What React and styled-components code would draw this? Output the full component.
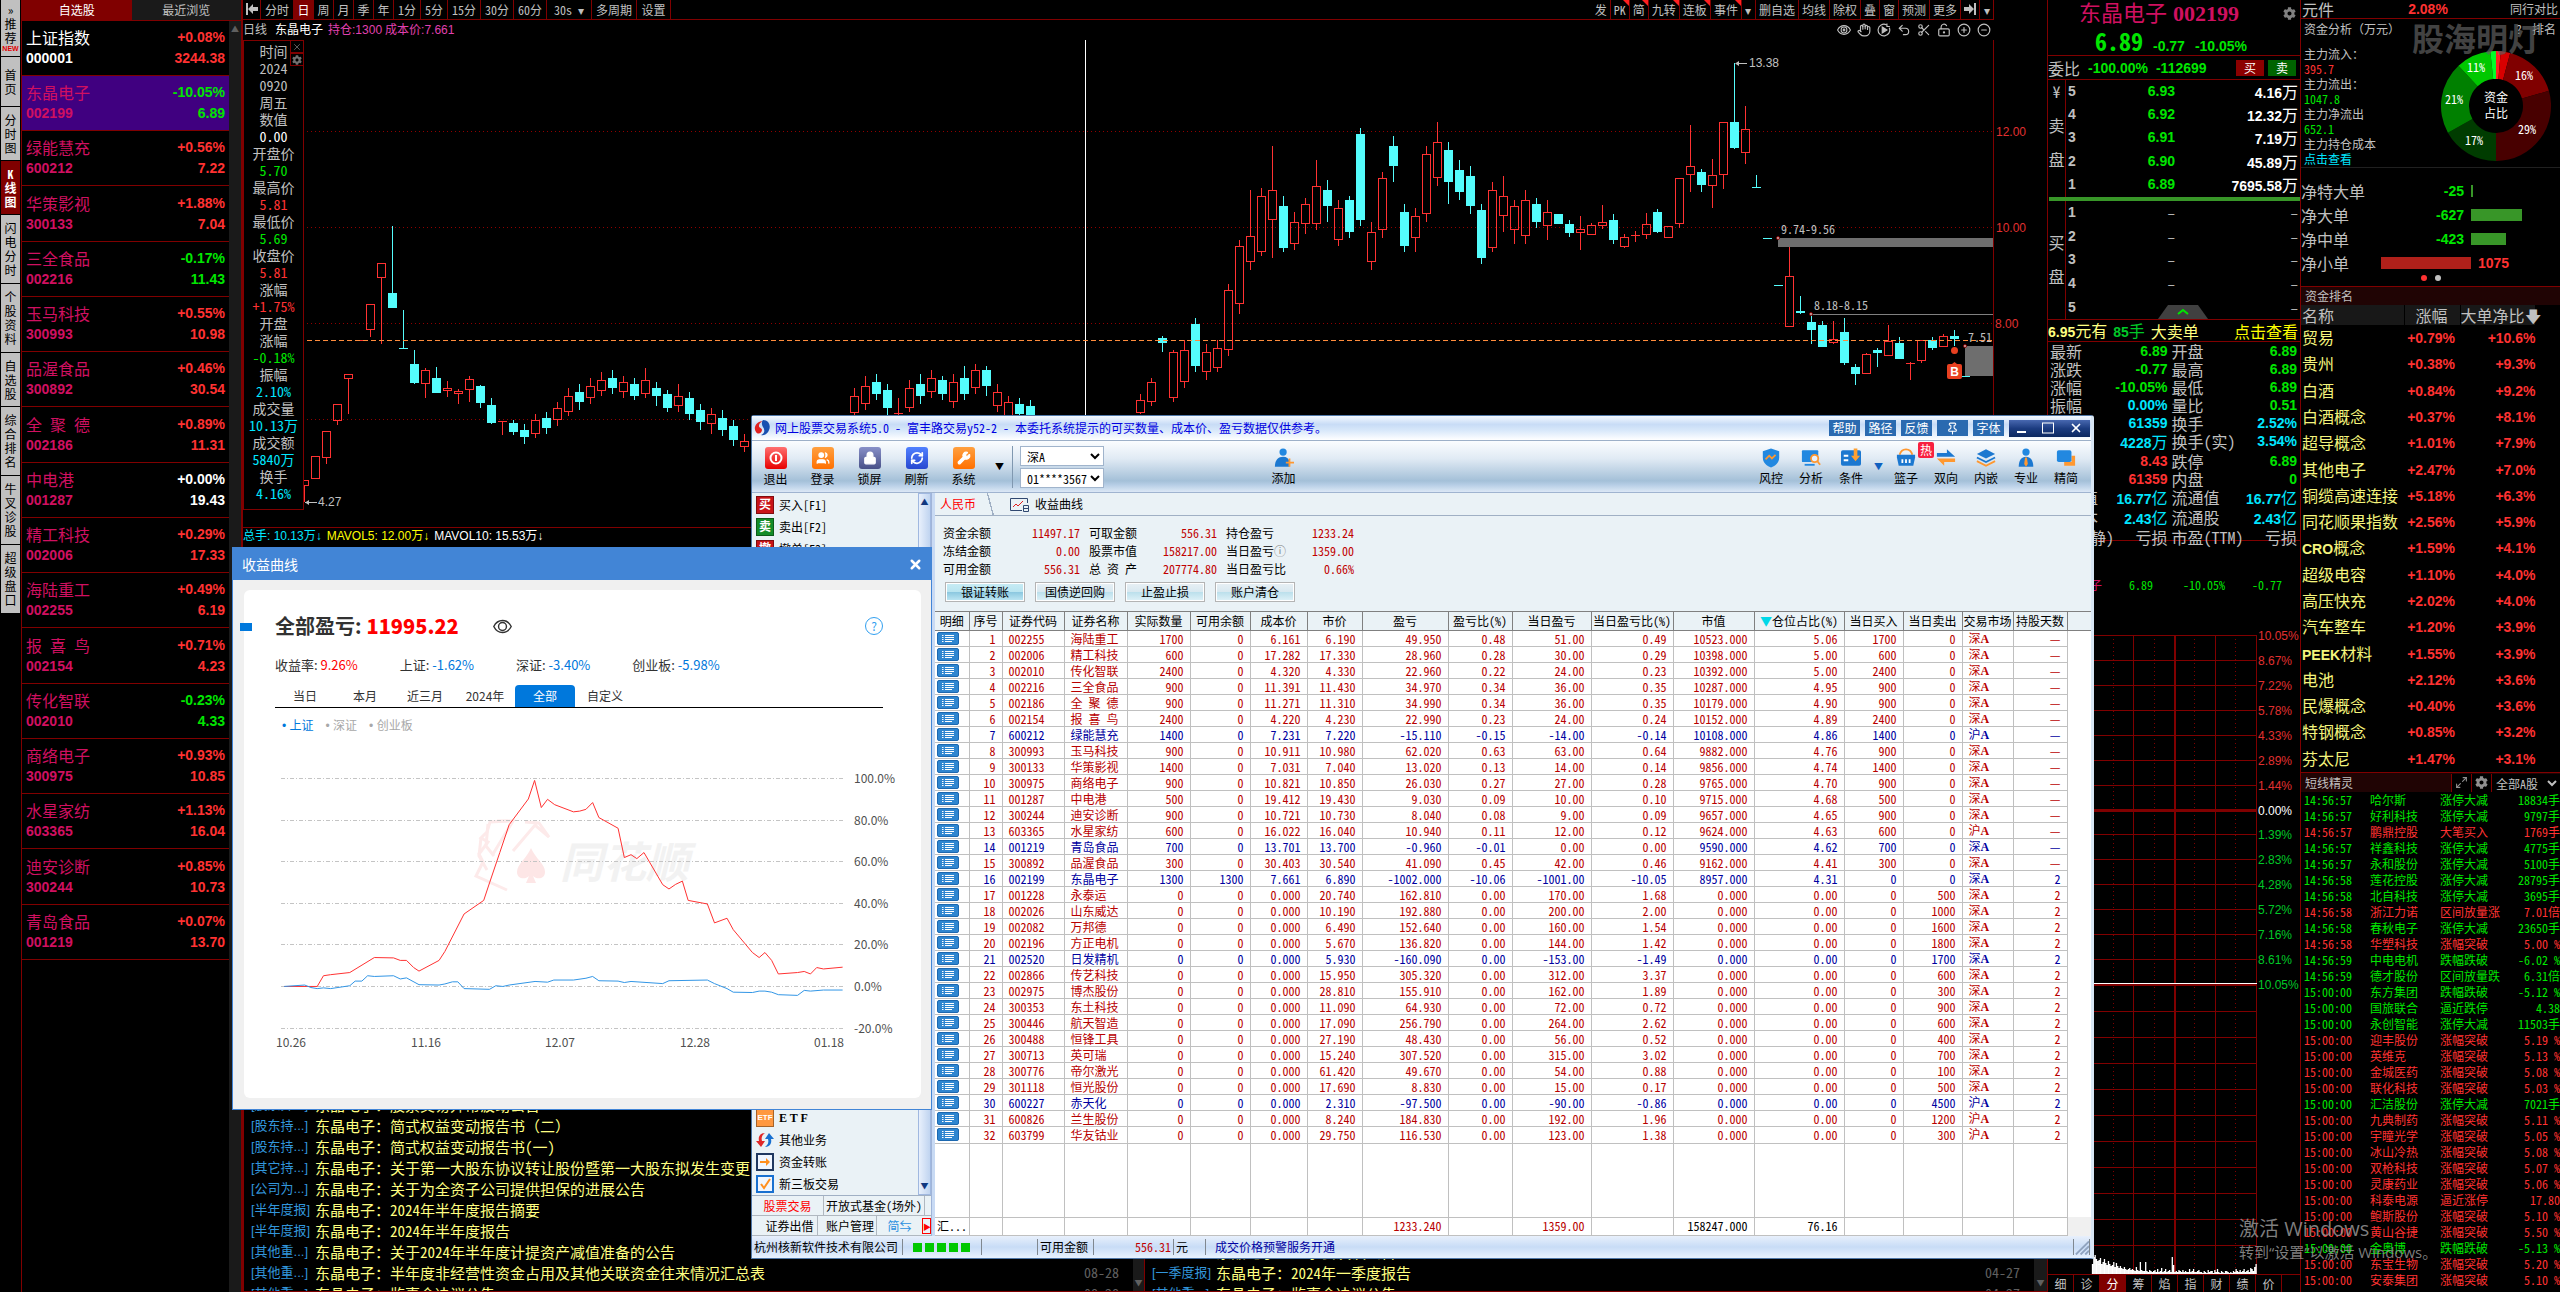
import React from "react";
import styled, { createGlobalStyle, css } from "styled-components";
import {
  Hand,
  Undo2,
  Scissors,
  LockKeyholeOpen,
  CirclePlus,
  CircleMinus,
  Maximize2,
  Users,
  Lock,
  RefreshCw,
  Wrench,
  X,
  Pin,
} from "lucide-react";
import { FaCog } from "react-icons/fa";

const mono = `"Noto Sans Mono CJK SC", "Liberation Sans", "Noto Sans CJK SC", sans-serif`;
const sans = `"Liberation Sans", "Noto Sans CJK SC", sans-serif`;
const cjk = `"Noto Sans CJK SC", sans-serif`;
const RED = "#ff3232";
const GREEN = "#00e600";
const CYAN = "#00e6ff";
const LINE = "#800000";
const PINK = "#d01060";

const GlobalStyle = createGlobalStyle`
  * { box-sizing: border-box; }
  body { margin: 0; background: #000; overflow: hidden; }
  button, select { font: inherit; color: inherit; margin: 0; border-radius: 0; }
  a { color: inherit; text-decoration: none; }
`;

const Desktop = styled.div`
  position: relative;
  display: grid;
  grid-template-columns: 21px 220px minmax(0, 1fr) 253px 260px;
  height: 100vh;
  overflow: hidden;
  background: #000;
  color: #c0c0c0;
  font: 12px/16px ${mono};
`;

/* ---------- left side tabs ---------- */

const SideTabs = styled.nav`
  display: flex;
  flex-direction: column;
  padding-left: 1px;
`;

const SideTab = styled.button`
  display: flex;
  flex-direction: column;
  align-items: center;
  justify-content: center;
  width: 19px;
  height: ${(p) => p.$h}px;
  padding: 0;
  border: 0;
  border-bottom: 1px solid #000;
  background: ${(p) => (p.$on ? LINE : "#c0c0c0")};
  color: ${(p) => (p.$on ? "#fff" : "#000")};
  font: ${(p) => (p.$on ? "bold" : "normal")} 12px/14px ${mono};

  small {
    color: #e00000;
    font: bold 7px/8px ${sans};
  }
`;

const sideTabs = [
  ["»推荐", 57],
  ["首页", 50],
  ["分时图", 54],
  ["K线图", 54],
  ["闪电分时", 69],
  ["个股资料", 69],
  ["自选股", 54],
  ["综合排名", 69],
  ["牛叉诊股", 69],
  ["超级盘口", 69],
];

/* ---------- watch list ---------- */

const WatchPanel = styled.section`
  display: grid;
  grid-template-columns: minmax(0, 1fr) 12px;
  grid-template-rows: 21px minmax(0, 1fr);
  border-left: 1px solid ${LINE};
`;

const WatchTabs = styled.div`
  display: flex;
  grid-column: 1 / 3;
  border-bottom: 1px solid ${LINE};
`;

const WatchTab = styled.button`
  flex: 1;
  padding: 0;
  border: 0;
  background: ${(p) => (p.$on ? LINE : "#1a1a1a")};
  color: ${(p) => (p.$on ? "#fff" : "#c0c0c0")};
`;

const WatchRow = styled.div`
  display: grid;
  grid-template-columns: 1fr auto;
  align-content: center;
  height: 55px;
  padding: 0 4px;
  border-bottom: 1px solid ${LINE};
  color: ${(p) => p.$color};
  background: ${(p) => (p.$on ? "#400080" : "transparent")};
  font: bold 14px/21px ${sans};

  &:nth-child(4n) {
    height: 56px;
  }
`;

const WatchName = styled.span`
  color: ${(p) => p.$color};
  font: 16px/21px ${mono};
`;

const WatchCode = styled.span`
  color: ${(p) => p.$color};
`;

const Right = styled.span`
  text-align: right;
`;

const ScrollTrack = styled.div`
  display: flex;
  flex-direction: column;
  align-items: center;
  justify-content: ${(p) => (p.$end ? "flex-end" : "flex-start")};
  background: #1a1a1a;
  color: #606060;
  font-size: 8px;
`;

const watch = [
  ["上证指数", "000001", "+0.08%", "3244.38"],
  ["东晶电子", "002199", "-10.05%", "6.89"],
  ["绿能慧充", "600212", "+0.56%", "7.22"],
  ["华策影视", "300133", "+1.88%", "7.04"],
  ["三全食品", "002216", "-0.17%", "11.43"],
  ["玉马科技", "300993", "+0.55%", "10.98"],
  ["品渥食品", "300892", "+0.46%", "30.54"],
  ["全 聚 德", "002186", "+0.89%", "11.31"],
  ["中电港", "001287", "+0.00%", "19.43"],
  ["精工科技", "002006", "+0.29%", "17.33"],
  ["海陆重工", "002255", "+0.49%", "6.19"],
  ["报 喜 鸟", "002154", "+0.71%", "4.23"],
  ["传化智联", "002010", "-0.23%", "4.33"],
  ["商络电子", "300975", "+0.93%", "10.85"],
  ["水星家纺", "603365", "+1.13%", "16.04"],
  ["迪安诊断", "300244", "+0.85%", "10.73"],
  ["青岛食品", "001219", "+0.07%", "13.70"],
];

const signColor = (v) =>
  v.startsWith("-") ? GREEN : v === "+0.00%" ? "#fff" : RED;

const WatchList = () => (
  <WatchPanel>
    <WatchTabs>
      <WatchTab $on>自选股</WatchTab>
      <WatchTab>最近浏览</WatchTab>
    </WatchTabs>
    <div>
      {watch.map(([name, code, pct, price], i) => {
        const c = i === 0 ? "#fff" : PINK;
        return (
          <WatchRow key={code} $on={i === 1} $color={signColor(pct)}>
            <WatchName $color={c}>{name}</WatchName>
            <Right>{pct}</Right>
            <WatchCode $color={c}>{code}</WatchCode>
            <Right>{price}</Right>
          </WatchRow>
        );
      })}
    </div>
    <ScrollTrack>▲</ScrollTrack>
  </WatchPanel>
);

/* ---------- k-line chart ---------- */

const ChartPanel = styled.main`
  display: flex;
  flex-direction: column;
  min-width: 0;
  border-left: 2px solid ${LINE};
  border-bottom: 1px solid ${LINE};
`;

const Toolbar = styled.div`
  display: flex;
  height: 20px;
  margin-right: 53px;
  border-bottom: 1px solid ${LINE};
`;

const ToolButton = styled.button`
  position: relative;
  min-width: ${(p) => p.$min || 20}px;
  padding: 0 ${(p) => (p.$wide ? 4 : 3)}px;
  border: 0;
  border-right: 1px solid ${LINE};
  background: ${(p) => (p.$on ? LINE : "transparent")};
  color: ${(p) => (p.$on ? "#fff" : "#c0c0c0")};
  line-height: 19px;
  white-space: nowrap;

  ${(p) =>
    p.$tight &&
    css`
      padding: 0 1px;
    `}
  ${(p) =>
    p.$hot &&
    css`
      &::after {
        content: "";
        position: absolute;
        top: 0;
        right: 0;
        border-top: 6px solid #ff2020;
        border-left: 6px solid transparent;
      }
    `}
`;

const Grow = styled.div`
  flex: 1;
`;

const ChartTitle = styled.div`
  display: flex;
  align-items: center;
  gap: 3px;
  height: 20px;
  padding-right: 56px;
  color: #e040b0;
  font: 12px/16px ${sans};

  svg {
    color: #c0c0c0;
  }
`;

const ChartIcons = styled.div`
  display: flex;
  gap: 6px;
  margin-left: auto;
`;

const White = styled.span`
  padding: 0 2px 0 5px;
  color: #fff;
`;

const Gray = styled.span`
  color: #c0c0c0;
`;

const ChartBody = styled.div`
  position: relative;
  border-bottom: 1px solid ${LINE};

  > svg {
    display: block;
    width: 100%;
    height: 487px;
  }
`;

const InfoBox = styled.div`
  position: absolute;
  top: 0;
  left: 0;
  display: flex;
  flex-direction: column;
  width: 61px;
  height: 470px;
  padding-top: 2px;
  border: 1px solid ${LINE};
  background: #000;
  color: #c0c0c0;
  font: 14px/17px ${mono};
  text-align: center;
`;

const InfoLine = styled.span`
  color: ${(p) => p.$color};
`;

const InfoTools = styled.div`
  position: absolute;
  top: -1px;
  right: -1px;
  display: flex;
  flex-direction: column;

  button {
    display: grid;
    place-items: center;
    width: 14px;
    height: 13px;
    padding: 0;
    border: 1px solid ${LINE};
    background: #000;
    color: #707070;
  }

  svg {
    width: 10px;
    height: 10px;
  }
`;

const infoLines = [
  ["时间"], ["2024"], ["0920"], ["周五"], ["数值"], ["0.00", "#fff"],
  ["开盘价"], ["5.70", GREEN], ["最高价"], ["5.81", RED],
  ["最低价"], ["5.69", GREEN], ["收盘价"], ["5.81", RED],
  ["涨幅"], ["+1.75%", RED], ["开盘"], ["涨幅"], ["-0.18%", GREEN],
  ["振幅"], ["2.10%", CYAN], ["成交量"], ["10.13万", CYAN],
  ["成交额"], ["5840万", CYAN], ["换手"], ["4.16%", CYAN],
];

// one entry per candle: slot, u|d, body top, body bottom, high, low
const candles = `0 u 480 486 480 502,1 u 456 479 456 479,2 u 431 458 431 464,3 u 404 421 404 425,4 u 374 379 374 414,5 u 340 340 340 340,6 u 304 330 304 337,7 u 263 278 263 344,8 d 293 308 226 308,9 d 348 348 310 348,10 d 364 383 350 384,11 u 370 384 368 398,12 d 378 393 367 393,13 u 388 391 381 397,14 u 391 394 389 404,15 u 379 390 376 402,16 d 386 403 385 408,17 d 405 423 398 424,18 u 421 421 421 435,19 d 423 432 420 435,20 d 430 437 424 444,21 u 420 434 414 438,22 d 418 428 412 434,23 u 408 420 402 426,24 u 396 412 388 416,25 d 392 402 384 410,26 u 386 398 378 404,27 u 380 391 372 396,28 d 378 388 370 394,29 u 382 392 376 398,30 d 384 396 378 400,31 u 380 394 368 398,32 d 388 396 382 406,33 d 394 408 390 412,34 u 396 406 384 412,35 d 398 414 392 420,36 d 410 422 404 430,37 u 414 424 408 434,38 d 418 430 410 436,39 d 426 440 420 446,40 u 441 447 434 452,50 u 396 413 388 415,51 u 386 404 376 410,52 d 382 394 374 400,53 d 390 408 384 418,54 u 413 413 398 418,55 u 388 408 380 412,56 d 384 396 374 404,57 u 378 392 370 398,58 d 380 394 376 400,59 u 382 402 374 408,60 d 378 394 366 400,61 u 370 388 364 394,62 d 370 386 366 396,63 u 392 406 384 412,64 u 402 418 396 418,65 d 404 414 398 418,66 d 406 420 400 420,76 u 400 413 394 414,77 u 382 402 378 406,78 d 338 343 336 352,79 u 352 398 350 402,80 u 350 382 340 388,81 d 324 366 318 372,82 u 352 372 344 380,83 u 348 368 340 372,84 u 290 350 284 356,85 u 246 304 240 314,86 u 236 262 190 270,87 u 196 252 188 256,88 u 190 220 146 258,89 d 206 248 196 252,90 u 222 244 212 250,91 u 204 224 198 234,92 u 186 224 160 230,93 d 190 206 180 222,94 u 208 240 200 246,95 d 200 232 196 238,96 d 134 220 128 226,97 u 232 262 222 270,98 u 178 230 172 238,99 d 146 166 136 182,100 d 212 246 204 252,101 u 216 238 208 252,102 u 154 214 146 222,103 u 142 178 122 186,104 d 150 182 142 204,105 d 170 192 160 200,106 d 176 206 166 214,107 d 210 258 204 264,108 u 190 248 182 252,109 u 196 216 176 232,110 u 206 230 200 244,111 u 200 236 190 244,112 d 204 222 198 228,113 u 212 226 200 240,114 d 214 224 214 224,115 d 224 233 220 237,116 u 229 233 216 250,117 u 225 235 223 235,118 u 222 226 205 229,119 d 220 240 214 244,120 u 237 247 234 248,121 u 235 236 231 242,122 u 224 235 213 239,123 d 212 232 209 233,124 u 226 238 226 238,125 u 178 224 178 228,126 u 166 175 125 192,127 d 172 185 169 192,128 u 175 186 159 208,129 u 122 175 122 189,130 d 122 148 63 149,131 u 129 153 106 164,132 d 187 187 175 187,133 d 238 238 238 238,134 d 285 285 285 285,135 u 276 327 247 327,136 d 311 313 296 314,137 d 322 330 314 344,138 d 325 347 321 347,139 u 339 343 321 344,140 d 332 363 318 365,141 d 367 374 364 385,142 u 354 374 353 374,143 d 350 353 348 367,144 u 341 356 325 356,145 d 343 359 337 359,146 u 363 364 362 380,147 u 340 361 340 363,148 d 340 348 337 350,149 u 336 347 334 347,150 d 336 339 330 346,151 d 376 376 376 376`
  .split(",")
  .map((s) => {
    const [i, dir, ...ys] = s.split(" ");
    return { x: 304.5 + 11 * Number(i), dir, ys: ys.map(Number) };
  });

const Candle = ({ x, dir, ys: [top, bottom, high, low] }) => {
  const up = dir === "u";
  const color = up ? "#ff3232" : "#54fcfc";
  if (bottom - top < 2) {
    return (
      <g stroke={color}>
        <path d={`M${x - 4.5} ${top + 0.5}h9M${x} ${high}V${low}`} />
      </g>
    );
  }
  return (
    <g stroke={color}>
      <path d={`M${x} ${high}V${top}M${x} ${bottom}V${low}`} />
      <rect
        x={x - 4}
        y={top + 0.5}
        width="8"
        height={bottom - top - 1}
        fill={up ? "none" : color}
      />
    </g>
  );
};

const KLine = () => (
  <svg viewBox="243 40 1804 487" preserveAspectRatio="xMinYMin slice" fontFamily={sans} fontSize="12">
    {[131.5, 227.5, 323.5, 419.5].map((y) => (
      <path key={y} d={`M243 ${y}H1993`} stroke="#900000" strokeDasharray="1 3" />
    ))}
    <path d="M1085.5 40V527" stroke="#fff" />
    <path d="M1993.5 40V527" stroke={LINE} />
    <rect x="1778" y="238" width="215" height="9" fill="#6e6e6e" />
    <path d="M1811 314.5H1993" stroke="#808080" />
    <rect x="1965" y="346" width="28" height="30" fill="#6e6e6e" />
    {candles.map((c) => (
      <Candle key={c.x} {...c} />
    ))}
    <path d="M243 340.5H1993" stroke="#ff8c3c" strokeDasharray="5 3" />
    <g fill="#e03030">
      <text x="1996" y="136">12.00</text>
      <text x="1996" y="232">10.00</text>
      <text x="1995" y="328">8.00</text>
    </g>
    <g fill="#c0c0c0">
      <text x="1749" y="67">13.38</text>
      <text x="318" y="506">4.27</text>
      <g fontFamily={mono}>
        <text x="1781" y="234">9.74-9.56</text>
        <text x="1814" y="310">8.18-8.15</text>
        <text x="1968" y="342">7.51</text>
      </g>
    </g>
    <path d="M1747 63.5H1736M305 502.5H317" stroke="#c0c0c0" />
    <path d="M1739 61v5l-4-2.5zM309 500v5l-4-2.5z" fill="#c0c0c0" />
    <g fill="#e0c0c0" stroke={LINE}>
      <circle cx="1778" cy="238" r="1.5" />
      <circle cx="1811" cy="314" r="1.5" />
      <circle cx="1965" cy="346" r="1.5" />
    </g>
    <circle cx="1954.5" cy="350.5" r="3.5" fill="#e84020" />
    <rect x="1947" y="364" width="15" height="15" rx="2" fill="#e84020" />
    <path d="M1952 364l2.5-2 2.5 2z" fill="#e84020" />
    <text x="1954.5" y="376" textAnchor="middle" fill="#fff" fontWeight="bold">B</text>
  </svg>
);

const VolumeLegend = styled.div`
  display: flex;
  gap: 5px;
  height: 17px;
  color: #fff;
  font: 12px/17px ${sans};
`;

const Tint = styled.span`
  color: ${(p) => p.$c};
`;

const News = styled.div`
  display: grid;
  grid-template-columns: minmax(0, 1fr) 11px minmax(0, 1fr) 13px;
  height: 197px;
  margin-top: auto;
`;

const NewsList = styled.div`
  overflow: hidden;
  padding-left: 7px;
  border-left: 1px solid ${LINE};
`;

const NewsItem = styled.a`
  display: flex;
  gap: 4px;
  align-items: center;
  height: 21px;
  padding-right: 14px;
  color: #ffff80;
  font: 15px/21px ${mono};
  white-space: nowrap;
`;

const NewsTag = styled.span`
  width: 60px;
  color: #3296dc;
  font: 13px/21px ${sans};
`;

const NewsDate = styled.time`
  margin-left: auto;
  color: #606060;
  font: 14px/21px ${mono};
`;

const newsLeft = [
  ["[股票异...]", "股票交易异常波动公告", "10-29"],
  ["[股东持...]", "简式权益变动报告书（二）", "10-10"],
  ["[股东持...]", "简式权益变动报告书(一)", "10-10"],
  ["[其它持...]", "关于第一大股东协议转让股份暨第一大股东拟发生变更", "10-08"],
  ["[公司为...]", "关于为全资子公司提供担保的进展公告", "09-20"],
  ["[半年度报]", "2024年半年度报告摘要", "08-28"],
  ["[半年度报]", "2024年半年度报告", "08-28"],
  ["[其他重...]", "关于2024年半年度计提资产减值准备的公告", "08-28"],
  ["[其他重...]", "半年度非经营性资金占用及其他关联资金往来情况汇总表", "08-28"],
  ["[其他重...]", "监事会决议公告", "08-28"],
];

const NewsColumn = ({ items }) => (
  <NewsList>
    {items.map(([tag, text, date], i) => (
      <NewsItem key={i} href="#">
        <NewsTag>{tag}</NewsTag>
        <span>东晶电子：{text}</span>
        <NewsDate>{date}</NewsDate>
      </NewsItem>
    ))}
  </NewsList>
);

const newsRight = Array.from({ length: 8 }, () => ["[其他重...]", "董事会决议公告", "04-27"]).concat([
  ["[一季度报]", "2024年一季度报告", "04-27"],
  ["[其他重...]", "监事会决议公告", "04-27"],
]);

const EyeIcon = ({ size = 14 }) => (
  <svg width={size} height={size} viewBox="0 0 24 24" fill="none" stroke="currentColor" strokeWidth="1.8">
    <path d="M1 12C6 2 18 2 23 12 18 22 6 22 1 12z" />
    <circle cx="12" cy="12" r="5" />
    {size < 16 && <circle cx="12" cy="12" r="1.5" />}
  </svg>
);

const ReplayIcon = () => (
  <svg width="14" height="14" viewBox="0 0 24 24" fill="none" stroke="currentColor" strokeWidth="2">
    <path d="M16 3a10 10 0 1 0 5 5M17 1v5h5" />
    <path d="M9 7l8 5-8 5z" fill="currentColor" />
  </svg>
);

const BarArrow = ({ flip }) => (
  <svg width="12" height="12" viewBox="0 0 12 12" fill="currentColor">
    {flip ? (
      <path d="M0 4h5V1l5 5-5 5V8H0zM10 0h2v12h-2z" />
    ) : (
      <path d="M12 4H7V1L2 6l5 5V8h5zM0 0h2v12H0z" />
    )}
  </svg>
);

const periods = [
  ["周"], ["月"], ["季"], ["年"], ["1分"], ["5分"], ["15分"], ["30分"], ["60分"],
  ["30s ▾", 45], ["多周期", 45], ["设置", 34],
];

const Chart = () => (
  <ChartPanel>
    <Toolbar>
      <ToolButton $min={18} $tight aria-label="收起"><BarArrow /></ToolButton>
      <ToolButton $wide>分时</ToolButton>
      <ToolButton $on>日</ToolButton>
      {periods.map(([t, w]) => (
        <ToolButton key={t} $wide={t.length > 1} $min={w}>{t}</ToolButton>
      ))}
      <Grow />
      {["发", "PK", "简", "九转", "连板", "事件"].map((t, i) => (
        <ToolButton key={t} $min={19} $hot={i > 0}>{t}</ToolButton>
      ))}
      <ToolButton $min={14} $tight>▾</ToolButton>
      {["删自选", "均线", "除权", "叠", "窗", "预测", "更多"].map((t) => (
        <ToolButton key={t} $min={19}>{t}</ToolButton>
      ))}
      <ToolButton $min={19} $tight aria-label="展开"><BarArrow flip /></ToolButton>
      <ToolButton $min={14} $tight>▾</ToolButton>
    </Toolbar>
    <ChartTitle>
      <Gray>日线</Gray>
      <White>东晶电子</White>
      <span>持仓:1300</span>
      <span>成本价:7.661</span>
      <ChartIcons>
        <EyeIcon />
        <Hand size={14} />
        <ReplayIcon />
        <Undo2 size={14} />
        <Scissors size={14} />
        <LockKeyholeOpen size={14} />
        <CirclePlus size={14} />
        <CircleMinus size={14} />
      </ChartIcons>
    </ChartTitle>
    <ChartBody>
      <KLine />
      <InfoBox>
        {infoLines.map(([t, c], i) => (
          <InfoLine key={i} $color={c}>{t}</InfoLine>
        ))}
        <InfoTools>
          <button aria-label="关闭"><X /></button>
          <button aria-label="设置"><FaCog /></button>
        </InfoTools>
      </InfoBox>
    </ChartBody>
    <VolumeLegend>
      <Tint $c={CYAN}>总手: 10.13万↓</Tint>
      <Tint $c="#ffff00">MAVOL5: 12.00万↓</Tint>
      <span>MAVOL10: 15.53万↓</span>
    </VolumeLegend>
    <News>
      <NewsColumn items={newsLeft} />
      <ScrollTrack $end>▼</ScrollTrack>
      <NewsColumn items={newsRight} />
      <ScrollTrack $end>▼</ScrollTrack>
    </News>
  </ChartPanel>
);

/* ---------- quote panel ---------- */

const QuotePanel = styled.section`
  display: flex;
  flex-direction: column;
  border-left: 1px solid ${LINE};
  font: bold 14px/18px ${sans};
`;

const QuoteHead = styled.header`
  display: grid;
  grid-template-columns: 1fr auto;
  align-items: center;
  height: 56px;
  padding: 0 4px 0 31px;
  border-bottom: 1px solid ${LINE};
  color: ${PINK};

  svg {
    color: #808080;
  }
`;

const QuoteName = styled.h1`
  margin: 0;
  font: 22px/26px "Liberation Serif", "Noto Sans CJK SC", serif;

  b {
    margin-left: 6px;
  }
`;

const QuotePrice = styled.div`
  display: flex;
  gap: 10px;
  align-items: baseline;
  padding-left: 16px;
  color: ${GREEN};

  strong {
    font: bold 24px/26px ${mono};
  }
`;

const Ratio = styled.div`
  display: flex;
  gap: 8px;
  align-items: center;
  height: 24px;
  padding-right: 4px;
  border-bottom: 1px solid ${LINE};
  color: ${GREEN};
`;

const Label = styled.span`
  color: #c0c0c0;
  font: 16px/18px ${mono};
`;

const TradeButton = styled.button`
  width: 28px;
  height: 16px;
  margin-left: ${(p) => (p.$first ? "auto" : "-4px")};
  padding: 0;
  border: 0;
  background: ${(p) => p.$bg};
  color: #fff;
  font: 12px/16px ${mono};
`;

const Book = styled.div`
  display: grid;
  grid-template-columns: 18px 1fr;
  height: ${(p) => p.$h}px;
`;

const BookSide = styled.div`
  display: flex;
  flex-direction: column;
  gap: 16px;
  align-items: center;
  padding-top: ${(p) => p.$top}px;
  border-right: 1px solid ${LINE};
  font: 16px/18px ${mono};
`;

const BookRows = styled.div`
  display: flex;
  flex-direction: column;
  justify-content: space-around;
`;

const BookRow = styled.div`
  display: grid;
  grid-template-columns: 20px 87px 1fr;
  padding: 0 2px;
  color: #c0c0c0;

  em {
    color: ${GREEN};
    font-style: normal;
    text-align: right;
  }

  span:last-child {
    color: #fff;
    text-align: right;
  }
`;

const Unit = styled.i`
  font: 16px/18px ${mono};
`;

const Empty = styled.i`
  color: #c0c0c0;
  font: 14px/18px ${mono};
`;

const BookSplit = styled.div`
  height: 4px;
  margin-left: 1px;
  background: #389628;
`;

const FoldTab = styled.button`
  position: absolute;
  bottom: 0;
  left: 110px;
  width: 50px;
  height: 14px;
  padding: 0;
  border: 0;
  background: #404040;
  clip-path: polygon(20% 0, 80% 0, 100% 100%, 0 100%);
  line-height: 0;
`;

const BidWrap = styled.div`
  position: relative;
  border-bottom: 1px solid ${LINE};
`;

const BigOrder = styled.div`
  display: flex;
  gap: 6px;
  align-items: center;
  height: 22px;
  padding-right: 2px;
  border-bottom: 1px solid ${LINE};
  color: #ffff80;

  a {
    margin-left: auto;
    color: #ffff00;
    font: 16px/18px ${mono};
  }
`;

const Stats = styled.div`
  display: grid;
  grid-template-columns: auto 1fr auto 1fr;
  height: 199px;
  padding: 0 3px 0 2px;
  border-bottom: 1px solid ${LINE};

  > *:nth-child(4n + 3) {
    margin-left: 4px;
  }
`;

const Value = styled.span`
  color: ${(p) => p.$c};
  text-align: right;
`;

const stats = [
  ["最新", "6.89", GREEN, "开盘", "6.89", GREEN],
  ["涨跌", "-0.77", GREEN, "最高", "6.89", GREEN],
  ["涨幅", "-10.05%", GREEN, "最低", "6.89", GREEN],
  ["振幅", "0.00%", CYAN, "量比", "0.51", GREEN],
  ["总手", "61359", CYAN, "换手", "2.52%", CYAN],
  ["金额", "4228万", CYAN, "换手(实)", "3.54%", CYAN],
  ["涨停", "8.43", RED, "跌停", "6.89", GREEN],
  ["外盘", "61359", RED, "内盘", "0", GREEN],
  ["总市值", "16.77亿", CYAN, "流通值", "16.77亿", CYAN],
  ["总股本", "2.43亿", CYAN, "流通股", "2.43亿", CYAN],
  ["市盈(静)", "亏损", "#c0c0c0", "市盈(TTM)", "亏损", "#c0c0c0"],
];

// chinese units stay thin next to the bold digits
const Num = ({ v }) => {
  const m = v.match(/^([-+\d.%]*)(.*)$/);
  return (
    <>
      {m[1]}
      {m[2] && <Unit>{m[2]}</Unit>}
    </>
  );
};

const MiniChart = styled.svg`
  flex: 1;
  display: block;
  width: 100%;
  min-height: 0;
  border-bottom: 1px solid ${LINE};
  font-weight: normal;
`;

const upper = ["10.05%", "8.67%", "7.22%", "5.78%", "4.33%", "2.89%", "1.44%", "0.00%"];
const lower = ["1.39%", "2.83%", "4.28%", "5.72%", "7.16%", "8.61%", "10.05%"];
const ticks = "10 17 19 15 13 14 16 10 12 15 11 9 13 10 8 9 12 7 11 8 6 8 6 5 7 5 4 5 6 4 5 4 3 7 4 3 12 4 3 3 12 3 2 4 3 2 3 4 2 5 2 3 6 2 3 5 2 3 4 2 17 9 2 3 2 4 3 2 4 2 3 2 2 5 2 3 5 2 2 3 4 2 2 1 3 2 1 4 2 3 3 1 4 2 5 2 1 3 2 1 3 3 2 1 2 1 3 2 5 3 2 4 2 3 5 2 3 4 2 6 5 3 7 10"
  .split(" ")
  .map(Number);

const IntradayGrid = () => (
  <MiniChart viewBox="0 0 252 733" preserveAspectRatio="xMinYMin slice" fontFamily={sans} fontSize="12">
    <g fontFamily={mono} fill={GREEN}>
      <text x="6" y="49" fill={PINK}>东晶电子</text>
      <text x="81" y="49">6.89</text>
      <text x="135" y="49">-10.05%</text>
      <text x="204" y="49">-0.77</text>
    </g>
    <g stroke={LINE} fill="none">
      {upper.slice(0, 7).map((t, i) => (
        <path key={t} d={`M0 ${94.5 + 25 * i}H209`} />
      ))}
      <path d="M0 269.5H209" strokeWidth="3" />
      {lower.slice(0, 6).map((t, i) => (
        <path key={t} d={`M0 ${293.5 + 25 * i}H209`} />
      ))}
      <path d="M0 444H209" strokeWidth="2" />
      {Array.from({ length: 10 }, (_, i) => (
        <path key={i} d={`M0 ${470.5 + 26 * i}H209`} />
      ))}
      <path d="M85.5 94V733M167.5 94V733M208.5 94V733" />
      <path d="M127 94V733" strokeWidth="2" />
      <path d="M65.5 94V733M106.5 94V733M146.5 94V733M187.5 94V733" strokeDasharray="1 3" />
    </g>
    <path d="M44 442.5H209" stroke="#fff" />
    {upper.map((t, i) => (
      <text key={t} x="210" y={99 + 25 * i} fill={i === 7 ? "#fff" : "#e03030"}>{t}</text>
    ))}
    {lower.map((t, i) => (
      <text key={t} x="210" y={298 + 25 * i} fill="#00c828">{t}</text>
    ))}
    <path
      d={ticks.map((h, i) => `M${44.5 + i * 1.33} 733v-${h}`).join("")}
      stroke="#fff"
      strokeWidth="1.3"
    />
  </MiniChart>
);

const BottomTabs = styled.div`
  display: flex;
  height: 17px;
`;

const BottomTab = styled.button`
  width: 26px;
  padding: 0;
  border: 0;
  border-right: 1px solid ${LINE};
  background: ${(p) => (p.$on ? LINE : "transparent")};
  color: ${(p) => (p.$on ? "#fff" : "#c0c0c0")};
  font: 12px/16px ${mono};
`;

const Quote = () => (
  <QuotePanel>
    <QuoteHead>
      <QuoteName>东晶电子<b>002199</b></QuoteName>
      <FaCog size={13} />
      <QuotePrice>
        <strong>6.89</strong>
        <span>-0.77</span>
        <span>-10.05%</span>
      </QuotePrice>
    </QuoteHead>
    <Ratio>
      <Label>委比</Label>
      <span>-100.00%</span>
      <span>-112699</span>
      <TradeButton $first $bg="#8c0000">买</TradeButton>
      <TradeButton $bg="#006400">卖</TradeButton>
    </Ratio>
    <Book $h={117}>
      <BookSide $top={2}><span>¥</span><span>卖</span><span>盘</span></BookSide>
      <BookRows>
        {[["5", "6.93", "4.16"], ["4", "6.92", "12.32"], ["3", "6.91", "7.19"], ["2", "6.90", "45.89"], ["1", "6.89", "7695.58"]].map(([n, p, v]) => (
          <BookRow key={n}>
            <span>{n}</span>
            <em>{p}</em>
            <span><Num v={`${v}万`} /></span>
          </BookRow>
        ))}
      </BookRows>
    </Book>
    <BookSplit />
    <BidWrap>
      <Book $h={118}>
        <BookSide $top={32}><span>买</span><span>盘</span></BookSide>
        <BookRows>
          {["1", "2", "3", "4", "5"].map((n) => (
            <BookRow key={n}>
              <span>{n}</span>
              <Right><Empty>–</Empty></Right>
              <span><Empty>–</Empty></span>
            </BookRow>
          ))}
        </BookRows>
      </Book>
      <FoldTab aria-label="收起">
        <svg width="12" height="8" viewBox="0 0 12 8" fill="none" stroke={GREEN} strokeWidth="2">
          <path d="M1 6l5-4 5 4" />
        </svg>
      </FoldTab>
    </BidWrap>
    <BigOrder>
      <span>6.95<Unit>元有</Unit></span>
      <Tint $c="#00c828">85<Unit>手</Unit></Tint>
      <Unit>大卖单</Unit>
      <a href="#">点击查看</a>
    </BigOrder>
    <Stats>
      {stats.map(([a, av, ac, b, bv, bc]) => (
        <React.Fragment key={a}>
          <Label>{a}</Label>
          <Value $c={ac}><Num v={av} /></Value>
          <Label>{b}</Label>
          <Value $c={bc}><Num v={bv} /></Value>
        </React.Fragment>
      ))}
    </Stats>
    <IntradayGrid />
    <BottomTabs>
      {"细诊分筹焰指财绩价".split("").map((t) => (
        <BottomTab key={t} $on={t === "分"}>{t}</BottomTab>
      ))}
    </BottomTabs>
  </QuotePanel>
);

/* ---------- money flow panel ---------- */

const FlowPanel = styled.section`
  display: flex;
  flex-direction: column;
  min-height: 0;
  border-left: 1px solid ${LINE};
`;

const Sector = styled.div`
  display: flex;
  align-items: center;
  justify-content: space-between;
  height: 19px;
  padding: 0 2px 0 1px;
  border-bottom: 1px solid ${LINE};

  b {
    margin-left: 12px;
    color: ${RED};
    font: bold 14px/18px ${sans};
  }
`;

const FlowBox = styled.div`
  position: relative;
  display: grid;
  grid-template-columns: 132px 1fr;
  height: 149px;
  padding: 2px 4px 0 3px;
  border-bottom: 1px solid #202020;
`;

const FlowHead = styled.div`
  display: flex;
  grid-column: 1 / 3;
  gap: 10px;
  height: 16px;

  span:first-child {
    flex: 1;
  }
`;

const FlowLines = styled.div`
  display: flex;
  flex-direction: column;
  padding-top: 7px;
  line-height: 15px;

  a {
    color: ${CYAN};
  }
`;

const Brand = styled.div`
  position: absolute;
  top: 0;
  right: 20px;
  color: rgba(96, 96, 96, 0.7);
  font: bold 32px/36px ${cjk};
`;

const NetRow = styled.div`
  display: grid;
  grid-template-columns: 80px 90px 1fr;
  align-items: center;
  height: 24px;
  font: bold 14px/18px ${sans};
`;

const NetValue = styled.span`
  padding: 0 7px;
  color: ${(p) => p.$c};
  text-align: ${(p) => (p.$left ? "left" : "right")};
`;

const Bar = styled.div`
  width: ${(p) => p.$w}px;
  height: 12px;
  background: ${(p) => p.$c};
`;

const NetBox = styled.div`
  height: 119px;
  padding-top: 11px;
  border-bottom: 1px solid ${LINE};
`;

const Dots = styled.div`
  display: flex;
  gap: 8px;
  padding-left: 120px;

  i {
    width: 6px;
    height: 6px;
    border-radius: 50%;
    background: #c0c0c0;
  }

  i:first-child {
    background: ${RED};
  }
`;

const SectionTitle = styled.div`
  display: flex;
  align-items: center;
  height: ${(p) => p.$h}px;
  padding-left: 4px;
  background: #200404;
  border-top: ${(p) => (p.$line ? `1px solid ${LINE}` : "0")};

  > span {
    flex: 1;
  }
`;

const IconButton = styled.button`
  display: grid;
  place-items: center;
  width: 20px;
  height: 18px;
  padding: 0;
  border: 0;
  border-left: 1px solid ${LINE};
  background: #000;
  color: #909090;
`;

const MarketSelect = styled.select`
  width: 69px;
  height: 18px;
  padding: 0;
  border: 0;
  border-left: 1px solid ${LINE};
  background: #000;
`;

const RankTable = styled.table`
  width: 235px;
  height: 467px;
  border-collapse: collapse;
  color: ${RED};
  font: bold 14px/18px ${sans};
  text-align: right;
  table-layout: fixed;

  th {
    height: 20px;
    padding: 0;
    border-right: 1px solid #000;
    background: #181818;
    color: #c0c0c0;
    font: 16px/20px ${mono};
    text-align: right;
    white-space: nowrap;
  }

  th:nth-child(2) {
    padding-right: 12px;
  }

  th:first-child,
  td:first-child {
    padding: 0 0 0 1px;
    color: #f4f47c;
    text-align: left;
    white-space: nowrap;
  }

  th:first-child {
    color: #c0c0c0;
  }

  td {
    padding: 0;
  }

  td:nth-child(2) {
    padding-right: 5px;
  }
`;

const ranks = [
  ["贸易", "+0.79%", "+10.6%"],
  ["贵州", "+0.38%", "+9.3%"],
  ["白酒", "+0.84%", "+9.2%"],
  ["白酒概念", "+0.37%", "+8.1%"],
  ["超导概念", "+1.01%", "+7.9%"],
  ["其他电子", "+2.47%", "+7.0%"],
  ["铜缆高速连接", "+5.18%", "+6.3%"],
  ["同花顺果指数", "+2.56%", "+5.9%"],
  ["CRO概念", "+1.59%", "+4.1%"],
  ["超级电容", "+1.10%", "+4.0%"],
  ["高压快充", "+2.02%", "+4.0%"],
  ["汽车整车", "+1.20%", "+3.9%"],
  ["PEEK材料", "+1.55%", "+3.9%"],
  ["电池", "+2.12%", "+3.6%"],
  ["民爆概念", "+0.40%", "+3.6%"],
  ["特钢概念", "+0.85%", "+3.2%"],
  ["芬太尼", "+1.47%", "+3.1%"],
];

const AlertTable = styled.table`
  width: 100%;
  border-collapse: collapse;
  table-layout: fixed;

  td {
    height: 16px;
    padding: 0;
    line-height: 16px;
    white-space: nowrap;
  }

  td:first-child {
    padding-left: 3px;
  }

  td:last-child {
    text-align: right;
  }
`;

const AlertRow = styled.tr`
  color: ${(p) => (p.$up ? RED : GREEN)};
`;

const alerts = `14:56:57 g 哈尔斯 涨停大减 18834手
14:56:57 g 好利科技 涨停大减 9797手
14:56:57 r 鹏鼎控股 大笔买入 1769手
14:56:57 g 祥鑫科技 涨停大减 4775手
14:56:57 g 永和股份 涨停大减 5100手
14:56:58 g 莲花控股 涨停大减 28795手
14:56:58 g 北自科技 涨停大减 3695手
14:56:58 r 浙江力诺 区间放量涨 7.01倍
14:56:58 g 春秋电子 涨停大减 23650手
14:56:58 r 华塑科技 涨幅突破 5.00_%
14:56:59 g 中电电机 跌幅跌破 -6.02_%
14:56:59 g 德才股份 区间放量跌 6.31倍
15:00:00 g 东方集团 跌幅跌破 -5.12_%
15:00:00 g 国旅联合 逼近跌停 4.38
15:00:00 g 永创智能 涨停大减 11503手
15:00:00 r 迎丰股份 涨幅突破 5.19_%
15:00:00 r 英维克 涨幅突破 5.13_%
15:00:00 r 金城医药 涨幅突破 5.08_%
15:00:00 r 联化科技 涨幅突破 5.03_%
15:00:00 g 汇洁股份 涨停大减 7021手
15:00:00 r 九典制药 涨幅突破 5.11_%
15:00:00 r 宇瞳光学 涨幅突破 5.05_%
15:00:00 r 冰山冷热 涨幅突破 5.08_%
15:00:00 r 双枪科技 涨幅突破 5.07_%
15:00:00 r 灵康药业 涨幅突破 5.06_%
15:00:00 r 科泰电源 逼近涨停 17.80
15:00:00 r 鲍斯股份 涨幅突破 5.10_%
15:00:00 r 黄山谷捷 涨幅突破 5.50_%
15:00:00 g 金奥博 跌幅跌破 -5.13_%
15:00:00 r 东宝生物 涨幅突破 5.20_%
15:00:00 r 安泰集团 涨幅突破 5.10_%`
  .split("\n")
  .map((l) => l.split(" "));

const slices = [
  [0, 5, "#ff2020"],
  [5, 15, "#d80000"],
  [15, 74, "#800000"],
  [74, 180, "#480000"],
  [180, 241, "#003c00"],
  [241, 317, "#008000"],
  [317, 354, "#00c800"],
  [354, 360, "#00ff28"],
];

const at = (deg, r) => {
  const a = ((deg - 90) * Math.PI) / 180;
  return `${(57 + r * Math.cos(a)).toFixed(1)} ${(57 + r * Math.sin(a)).toFixed(1)}`;
};

const Donut = () => (
  <svg width="114" height="114" viewBox="0 0 114 114" fontFamily={mono} fontSize="12" fill="#fff" textAnchor="middle">
    {slices.map(([a, b, c]) => (
      <path
        key={a}
        fill={c}
        d={`M${at(a, 55)}A55 55 0 0 1 ${at(b, 55)}L${at(b, 27)}A27 27 0 0 0 ${at(a, 27)}z`}
      />
    ))}
    <text x="85" y="31">16%</text>
    <text x="88" y="85">29%</text>
    <text x="35" y="96">17%</text>
    <text x="15" y="55">21%</text>
    <text x="37" y="23">11%</text>
    <text x="57" y="53">资金</text>
    <text x="57" y="69">占比</text>
  </svg>
);

const DonutWrap = styled.div`
  justify-self: end;
  margin-right: 3px;
  padding-top: 10px;
`;

const nets = [
  ["净特大单", -25, 2],
  ["净大单", -627, 51],
  ["净中单", -423, 35],
];

const Flow = () => (
  <FlowPanel>
    <Sector>
      <Label>元件</Label>
      <b>2.08%</b>
      <span>同行对比</span>
    </Sector>
    <FlowBox>
      <Brand>股海明灯</Brand>
      <FlowHead>
        <span>资金分析（万元）</span>
        <span>?</span>
        <span>排名</span>
      </FlowHead>
      <FlowLines>
        <span>主力流入：</span>
        <Tint $c={RED}>395.7</Tint>
        <span>主力流出：</span>
        <Tint $c={GREEN}>1047.8</Tint>
        <span>主力净流出</span>
        <Tint $c={GREEN}>652.1</Tint>
        <span>主力持仓成本</span>
        <a href="#">点击查看</a>
      </FlowLines>
      <DonutWrap><Donut /></DonutWrap>
    </FlowBox>
    <NetBox>
      {nets.map(([t, v, w]) => (
        <NetRow key={t}>
          <Label>{t}</Label>
          <NetValue $c={GREEN}>{v}</NetValue>
          <Bar $w={w} $c="#389628" />
        </NetRow>
      ))}
      <NetRow>
        <Label>净小单</Label>
        <Bar $w={90} $c="#b0201a" />
        <NetValue $left $c={RED}>1075</NetValue>
      </NetRow>
      <Dots><i /><i /></Dots>
    </NetBox>
    <SectionTitle $h={18}><span>资金排名</span></SectionTitle>
    <RankTable>
      <colgroup>
        <col style={{ width: 103 }} />
        <col style={{ width: 56 }} />
        <col />
      </colgroup>
      <thead>
        <tr>
          <th>名称</th>
          <th>涨幅</th>
          <th>大单净比🡇</th>
        </tr>
      </thead>
      <tbody>
        {ranks.map(([n, a, b]) => {
          const m = n.match(/^([A-Z]*)(.*)$/);
          return (
            <tr key={n}>
              <td>{m[1]}<Unit>{m[2]}</Unit></td>
              <td>{a}</td>
              <td>{b}</td>
            </tr>
          );
        })}
      </tbody>
    </RankTable>
    <SectionTitle $h={20} $line>
      <span>短线精灵</span>
      <IconButton aria-label="弹出"><Maximize2 size={13} /></IconButton>
      <IconButton aria-label="设置"><FaCog size={13} /></IconButton>
      <MarketSelect aria-label="市场"><option>全部A股</option></MarketSelect>
    </SectionTitle>
    <AlertTable>
      <colgroup>
        <col style={{ width: 69 }} />
        <col style={{ width: 70 }} />
        <col style={{ width: 66 }} />
        <col />
      </colgroup>
      <tbody>
        {alerts.map(([t, d, n, e, v], i) => (
          <AlertRow key={i} $up={d === "r"}>
            <td>{t}</td>
            <td>{n}</td>
            <td>{e}</td>
            <td>{v.replace("_", " ")}</td>
          </AlertRow>
        ))}
      </tbody>
    </AlertTable>
  </FlowPanel>
);

/* ---------- trading window ---------- */

const TradeWindow = styled.section`
  position: absolute;
  top: 415px;
  left: 751px;
  display: flex;
  flex-direction: column;
  width: 1343px;
  height: 844px;
  border: 1px solid #5078a8;
  border-right: 3px solid #d8e6f4;
  border-radius: 3px 3px 0 0;
  background: #eaf2f6;
  color: #000;
`;

const TradeTitle = styled.header`
  display: flex;
  gap: 5px;
  align-items: center;
  height: 25px;
  padding: 0 1px 0 2px;
  border-bottom: 1px solid #9db0c8;
  background: linear-gradient(#f4f9ff, #c8dcf6 35%, #d8e8fa 60%, #ffffff);
  color: #0000e0;
`;

const TitleButton = styled.button`
  display: grid;
  place-items: center;
  width: 31px;
  height: 16px;
  padding: 0;
  border: 0;
  background: #2a6ab0;
  color: #fff;
`;

const WindowControls = styled.div`
  display: flex;
  justify-content: space-around;
  align-items: center;
  width: 81px;
  height: 17px;
  background: linear-gradient(#4868b0, #1c3c80 50%, #0c2860);
  color: #fff;

  button {
    display: grid;
    padding: 0;
    border: 0;
    background: none;
  }
`;

const TradeBar = styled.div`
  display: flex;
  align-items: center;
  height: 52px;
  padding-right: 5px;
  border-bottom: 1px solid #a0b4d0;
  background: linear-gradient(#fbfdff, #e0eaf4 35%, #a4c0d8 78%, #b4cce4 85%, #dce8f6);
`;

const TradeTool = styled.button`
  position: relative;
  display: flex;
  flex-direction: column;
  gap: 2px;
  align-items: center;
  width: ${(p) => p.$w || 47}px;
  padding: 0;
  border: 0;
  background: none;
  font: 12px/16px ${mono};
`;

const Tile = styled.span`
  display: grid;
  place-items: center;
  width: 22px;
  height: 22px;
  border-radius: 3px;
  background: linear-gradient(${(p) => p.$a}, ${(p) => p.$b});
  color: #fff;
`;

const Hot = styled.span`
  position: absolute;
  top: -6px;
  right: -8px;
  width: 16px;
  height: 16px;
  border-radius: 2px;
  background: #f82040;
  color: #fff;
  font: 12px/16px ${mono};
`;

const Selects = styled.div`
  display: flex;
  flex-direction: column;
  gap: 2px;
  margin-right: 156px;
  padding-left: 7px;
  border-left: 1px solid #8098b0;

  select {
    width: 84px;
    height: 20px;
    padding: 0 0 0 2px;
    border: 1px solid #a0b4cc;
    background: #fff;
    color: #000;
  }
`;

const TradeBody = styled.div`
  display: grid;
  grid-template-columns: 179px 4px minmax(0, 1fr);
  flex: 1;
  min-height: 0;
`;

const Splitter = styled.div`
  border-left: 1px solid #a0b4d8;
  background: #c8daf4;
`;

const TreeSide = styled.div`
  display: flex;
  flex-direction: column;
`;

const Tree = styled.div`
  display: grid;
  grid-template-columns: 1fr 13px;
  flex: 1;
  border-bottom: 1px solid #a0b0c4;
`;

const TreeItems = styled.div`
  display: flex;
  flex-direction: column;
  padding: 1px 4px 0;

  > :nth-child(4) {
    margin-top: auto;
  }
`;

const TreeItem = styled.a`
  display: flex;
  gap: 5px;
  align-items: center;
  height: 22px;
`;

const TreeIcon = styled.span`
  width: 18px;
  height: 18px;
  border: 1px solid rgba(0, 0, 0, 0.35);
  background: ${(p) => p.$bg};
  color: #fff;
  font: bold ${(p) => (p.$small ? 8 : 12)}px/16px ${sans};
  text-align: center;
`;

const Etf = styled.b`
  font: bold 12px/16px "Liberation Serif", serif;
`;

const TreeScroll = styled.div`
  display: flex;
  flex-direction: column;
  justify-content: space-between;
  align-items: center;
  border: 1px solid #a0b8e0;
  background: linear-gradient(90deg, #e8f0fc, #c0d4f0);
  color: #103880;
  font-size: 8px;
`;

const TreeTabs = styled.div`
  display: flex;
  align-items: center;
  height: 20px;
  border-bottom: 1px solid #b0b8c0;

  button {
    height: 19px;
    padding: 0 2px;
    border: 0;
    border-right: 1px solid #b0b8c0;
    background: none;
    white-space: nowrap;
  }

  button:first-child {
    width: ${(p) => (p.$hot ? 72 : 66)}px;
    padding: 0 0 0 ${(p) => (p.$hot ? 0 : 10)}px;
    color: ${(p) => (p.$hot ? "#ff0000" : "#000")};
  }

  button + button {
    padding-left: ${(p) => (p.$hot ? 2 : 8)}px;
  }
`;

const Switch = styled.span`
  flex: 1;
  color: #2a90e0;
  text-align: center;
`;

const RedArrow = styled.span`
  width: 9px;
  height: 16px;
  border: 1px solid #ff0000;
  color: #ff0000;
  font-size: 8px;
`;

const Holdings = styled.div`
  display: flex;
  flex-direction: column;
  min-width: 0;
`;

const MoneyTabs = styled.div`
  display: flex;
  align-items: center;
  height: 23px;
  border-bottom: 1px solid #a0b0c4;

  svg {
    margin: 0 6px 0 8px;
  }
`;

const MoneyTab = styled.button`
  width: 66px;
  height: 100%;
  padding: 0 0 0 5px;
  border: 0;
  background: linear-gradient(75deg, transparent 80%, #a0b0c4 80%, #a0b0c4 82%, transparent 82%);
  color: #ff0000;
  text-align: left;
`;

const Balances = styled.div`
  display: grid;
  grid-template-columns: repeat(3, 60px 77px);
  padding: 8px 0 0 8px;
  line-height: 18px;
  white-space: nowrap;

  > :nth-child(even) {
    color: #c00000;
    text-align: right;
  }

  > :nth-child(6n + 3),
  > :nth-child(6n + 5) {
    margin-left: 9px;
  }
`;

const Actions = styled.div`
  display: flex;
  gap: 10px;
  padding: 4px 0 9px 10px;

  button {
    width: 80px;
    height: 20px;
    padding: 0;
    border: 1px solid #b4b4b4;
    background: linear-gradient(#e8f0f4, #d8e8f0 50%, #bce0ec 52%, #e0f2f8);
    box-shadow: inset 0 0 0 1px #fff;
    color: #000;
  }

  button:first-child {
    background: linear-gradient(#c8ecf4, #b8e4f0 50%, #8cc8e0 52%, #c0e8f4);
  }
`;

const Grid = styled.table`
  flex: 1;
  width: 100%;
  border-collapse: collapse;
  border-top: 1px solid #808080;
  background: #fff;
  table-layout: fixed;

  th {
    height: 19px;
    padding: 0;
    border-right: 1px solid #808080;
    border-bottom: 1px solid #808080;
    background: #eaf2f6;
    font-weight: normal;
    text-align: center;
    white-space: nowrap;
  }

  td {
    height: 16px;
    padding: 0 6px 0 4px;
    border-right: 1px solid #c0c0c0;
    border-bottom: 1px solid #c0c0c0;
    line-height: 14px;
    text-align: right;
    white-space: nowrap;
  }

  td:nth-child(1) {
    padding: 0 0 0 2px;
    text-align: left;
  }

  td:nth-child(3),
  td:nth-child(4),
  td:nth-child(17) {
    padding-left: 6px;
    text-align: left;
  }

  th:last-child,
  td:last-child {
    border-right: 0;
  }

  td:last-child {
    border-bottom: 0;
  }

  td svg {
    display: block;
  }

  b {
    font: bold 12px/14px "Liberation Serif", serif;
  }
`;

const HoldingRow = styled.tr`
  color: ${(p) => (p.$loss ? "#0000a0" : "#b80000")};
`;

const Filler = styled.tr`
  td {
    height: 74px;
  }
`;

const SumRow = styled.tr`
  td {
    height: 18px;
  }

  td:last-child {
    background: #f0f0f0;
  }
`;

const colWidths = [34, 33, 62, 63, 63, 60, 57, 55, 86, 64, 79, 82, 81, 90, 59, 59, 51, 54];
const heads = ["明细", "序号", "证券代码", "证券名称", "实际数量", "可用余额", "成本价", "市价", "盈亏", "盈亏比(%)", "当日盈亏", "当日盈亏比(%)", "市值", "仓位占比(%)", "当日买入", "当日卖出", "交易市场", "持股天数"];

const holdings = `002255,海陆重工,1700,0,6.161,6.190,49.950,0.48,51.00,0.49,10523.000,5.06,1700,0,深,—
002006,精工科技,600,0,17.282,17.330,28.960,0.28,30.00,0.29,10398.000,5.00,600,0,深,—
002010,传化智联,2400,0,4.320,4.330,22.960,0.22,24.00,0.23,10392.000,5.00,2400,0,深,—
002216,三全食品,900,0,11.391,11.430,34.970,0.34,36.00,0.35,10287.000,4.95,900,0,深,—
002186,全 聚 德,900,0,11.271,11.310,34.990,0.34,36.00,0.35,10179.000,4.90,900,0,深,—
002154,报 喜 鸟,2400,0,4.220,4.230,22.990,0.23,24.00,0.24,10152.000,4.89,2400,0,深,—
600212,绿能慧充,1400,0,7.231,7.220,-15.110,-0.15,-14.00,-0.14,10108.000,4.86,1400,0,沪,—
300993,玉马科技,900,0,10.911,10.980,62.020,0.63,63.00,0.64,9882.000,4.76,900,0,深,—
300133,华策影视,1400,0,7.031,7.040,13.020,0.13,14.00,0.14,9856.000,4.74,1400,0,深,—
300975,商络电子,900,0,10.821,10.850,26.030,0.27,27.00,0.28,9765.000,4.70,900,0,深,—
001287,中电港,500,0,19.412,19.430,9.030,0.09,10.00,0.10,9715.000,4.68,500,0,深,—
300244,迪安诊断,900,0,10.721,10.730,8.040,0.08,9.00,0.09,9657.000,4.65,900,0,深,—
603365,水星家纺,600,0,16.022,16.040,10.940,0.11,12.00,0.12,9624.000,4.63,600,0,沪,—
001219,青岛食品,700,0,13.701,13.700,-0.960,-0.01,0.00,0.00,9590.000,4.62,700,0,深,—
300892,品渥食品,300,0,30.403,30.540,41.090,0.45,42.00,0.46,9162.000,4.41,300,0,深,—
002199,东晶电子,1300,1300,7.661,6.890,-1002.000,-10.06,-1001.00,-10.05,8957.000,4.31,0,0,深,2
001228,永泰运,0,0,0.000,20.740,162.810,0.00,170.00,1.68,0.000,0.00,0,500,深,2
002026,山东威达,0,0,0.000,10.190,192.880,0.00,200.00,2.00,0.000,0.00,0,1000,深,2
002082,万邦德,0,0,0.000,6.490,152.640,0.00,160.00,1.54,0.000,0.00,0,1600,深,2
002196,方正电机,0,0,0.000,5.670,136.820,0.00,144.00,1.42,0.000,0.00,0,1800,深,2
002520,日发精机,0,0,0.000,5.930,-160.090,0.00,-153.00,-1.49,0.000,0.00,0,1700,深,2
002866,传艺科技,0,0,0.000,15.950,305.320,0.00,312.00,3.37,0.000,0.00,0,600,深,2
002975,博杰股份,0,0,0.000,28.810,155.910,0.00,162.00,1.89,0.000,0.00,0,300,深,2
300353,东土科技,0,0,0.000,11.090,64.930,0.00,72.00,0.72,0.000,0.00,0,900,深,2
300446,航天智造,0,0,0.000,17.090,256.790,0.00,264.00,2.62,0.000,0.00,0,600,深,2
300488,恒锋工具,0,0,0.000,27.190,48.430,0.00,56.00,0.52,0.000,0.00,0,400,深,2
300713,英可瑞,0,0,0.000,15.240,307.520,0.00,315.00,3.02,0.000,0.00,0,700,深,2
300776,帝尔激光,0,0,0.000,61.420,49.670,0.00,54.00,0.88,0.000,0.00,0,100,深,2
301118,恒光股份,0,0,0.000,17.690,8.830,0.00,15.00,0.17,0.000,0.00,0,500,深,2
600227,赤天化,0,0,0.000,2.310,-97.500,0.00,-90.00,-0.86,0.000,0.00,0,4500,沪,2
600826,兰生股份,0,0,0.000,8.240,184.830,0.00,192.00,1.96,0.000,0.00,0,1200,沪,2
603799,华友钴业,0,0,0.000,29.750,116.530,0.00,123.00,1.38,0.000,0.00,0,300,沪,2`
  .split("\n")
  .map((l) => l.split(","));

const sums = { 0: "汇...", 8: "1233.240", 10: "1359.00", 12: "158247.000", 13: "76.16" };

const DetailIcon = () => (
  <svg width="22" height="13" viewBox="0 0 22 13">
    <rect x="0.5" y="0.5" width="21" height="12" rx="1.5" fill="#2f86d0" stroke="#1c68b0" />
    <path d="M5 3.5h1.5M5 5.5h1.5M5 7.5h1.5M5 9.5h1.5M8 3.5h9M8 5.5h9M8 7.5h9M8 9.5h7" stroke="#fff" />
  </svg>
);

// flat 0.00 day figures keep the red of the other rows
const HoldingsTable = () => (
  <Grid>
    <colgroup>
      {colWidths.map((w, i) => (
        <col key={i} style={{ width: w }} />
      ))}
      <col />
    </colgroup>
    <thead>
      <tr>
        {heads.map((h) => (
          <th key={h}>
            {h.startsWith("仓位") && <Tint $c="#00d8e8">▼</Tint>}
            {h}
          </th>
        ))}
        <th />
      </tr>
    </thead>
    <tbody>
      {holdings.map((r, i) => (
        <HoldingRow key={r[0]} $loss={r[6].startsWith("-")}>
          <td><DetailIcon /></td>
          <td>{i + 1}</td>
          {r.map((v, j) => (
            <td key={j}>
              {j === 14 && <>{v}<b>A</b></>}
              {j !== 14 && (r[8] === "0.00" && (j === 8 || j === 9) ? <Tint $c="#b80000">{v}</Tint> : v)}
            </td>
          ))}
          <td />
        </HoldingRow>
      ))}
      <Filler>
        {Array.from({ length: 19 }, (_, i) => <td key={i} />)}
      </Filler>
      <SumRow>
        {Array.from({ length: 19 }, (_, i) => (
          <td key={i}>
            <Tint $c={i === 8 || i === 10 ? "#b80000" : "#000"}>{sums[i]}</Tint>
          </td>
        ))}
      </SumRow>
    </tbody>
  </Grid>
);

const StatusBar = styled.footer`
  display: flex;
  align-items: center;
  height: 22px;
  background: linear-gradient(#e8f0fc, #c8dcf6 50%, #e8f2fe);

  > * {
    height: 16px;
    border-right: 1px solid #808890;
    white-space: nowrap;
  }
`;

const StatusCell = styled.span`
  width: ${(p) => p.$w}px;
  padding: 0 2px 0 ${(p) => p.$pad || 2}px;
  color: ${(p) => p.$c || "#000"};
  text-align: ${(p) => (p.$right ? "right" : "left")};
`;

const Signal = styled.span`
  display: flex;
  gap: 3px;
  align-items: center;
  width: 79px;
  padding-left: 10px;

  i {
    width: 9px;
    height: 9px;
    background: #00c800;
  }
`;

const toolIcons = {
  风控: (
    <>
      <path d="M11 0l9 3v7c0 6-4 9-9 11-5-2-9-5-9-11V3z" fill="#2288e0" />
      <path d="M5 12l4-4 3 3 4-4" stroke="#ff9830" strokeWidth="2" fill="none" />
    </>
  ),
  分析: (
    <>
      <rect x="1" y="2" width="18" height="13" rx="1" fill="#2288e0" />
      <path d="M4 18h11" stroke="#2288e0" strokeWidth="2" />
      <circle cx="15" cy="11" r="4" fill="#e8f2ff" stroke="#ff9830" strokeWidth="2" />
      <path d="M18 14l3 4" stroke="#ff9830" strokeWidth="2" />
    </>
  ),
  条件: (
    <>
      <rect x="0" y="2" width="22" height="17" rx="2" fill="#1c78d0" />
      <path d="M3 8h5M3 13h5" stroke="#fff" strokeWidth="2" />
      <path d="M14 0h4v8h3l-5 6-5-6h3z" fill="#ffa030" />
    </>
  ),
  篮子: (
    <>
      <path d="M4 7c2-8 12-8 14 0" stroke="#ff9830" strokeWidth="2" fill="none" />
      <path d="M1 7h20v3l-2 9H3L1 10z" fill="#1c78d0" />
      <path d="M7 12v4M11 12v4M15 12v4" stroke="#fff" strokeWidth="2" />
    </>
  ),
  双向: (
    <>
      <path d="M1 5h11V1l9 8H1z" fill="#1c78d0" />
      <path d="M21 11H1l8 8v-4h12z" fill="#ff9830" />
    </>
  ),
  内嵌: (
    <>
      <path d="M11 1l10 5-10 5L1 6z" fill="#1c78d0" />
      <path d="M1 10l10 5 10-5" stroke="#1c78d0" strokeWidth="2" fill="none" />
      <path d="M1 14l10 5 10-5" stroke="#ff9830" strokeWidth="2" fill="none" />
    </>
  ),
  专业: (
    <>
      <circle cx="11" cy="4" r="4" fill="#2288e0" />
      <path d="M3 20c0-7 3-11 8-11s8 4 8 11z" fill="#1c78d0" />
      <path d="M10 10h2l1 7-2 3-2-3z" fill="#ff9830" />
    </>
  ),
  精简: (
    <>
      <path d="M17 8h4v11H9v-4h8z" fill="#ff9830" />
      <rect x="1" y="2" width="16" height="13" rx="2" fill="#2288e0" />
    </>
  ),
  添加: (
    <>
      <circle cx="10" cy="4" r="4" fill="#2288e0" />
      <path d="M1 20c0-8 4-11 9-11 4 0 6 2 7 5v6z" fill="#1c78d0" />
      <path d="M17 11v9M13 15.5h9" stroke="#ff9830" strokeWidth="2" />
    </>
  ),
};

const ToolIcon = ({ name }) => (
  <svg width="20" height="20" viewBox="0 0 22 21">{toolIcons[name]}</svg>
);

const Caret = styled.span`
  width: ${(p) => p.$w}px;
  color: ${(p) => p.$c};
  font-size: 9px;
  text-align: center;
`;

const PowerMark = () => (
  <svg width="14" height="14" viewBox="0 0 14 14" fill="none" stroke="#fff" strokeWidth="2">
    <circle cx="7" cy="7" r="5.5" />
    <path d="M7 4v6" />
  </svg>
);

const Trading = () => (
  <TradeWindow>
    <TradeTitle>
      <svg width="16" height="16" viewBox="0 0 16 16">
        <path d="M8 1C2 2-1 8 2 12c2 3 6 1 6-2 0-2-3-2-3-4 0-3 3-4 3-5z" fill="#e02020" />
        <path d="M9 0c6 0 8 6 6 10-1 3-4 6-8 5 4-2 4-5 2-8-1-2-2-5 0-7z" fill="#1850b0" />
      </svg>
      <span>网上股票交易系统5.0 - 富丰路交易y52-2 - 本委托系统提示的可买数量、成本价、盈亏数据仅供参考。</span>
      <Grow />
      <TitleButton>帮助</TitleButton>
      <TitleButton>路径</TitleButton>
      <TitleButton>反馈</TitleButton>
      <TitleButton aria-label="置顶"><Pin size={13} /></TitleButton>
      <TitleButton>字体</TitleButton>
      <WindowControls>
        <button aria-label="最小化"><svg width="12" height="12"><path d="M1 10h9" stroke="#fff" strokeWidth="2" /></svg></button>
        <button aria-label="最大化"><svg width="12" height="12"><rect x="0.5" y="1" width="11" height="10" fill="none" stroke="#fff" /></svg></button>
        <button aria-label="关闭"><X size={14} strokeWidth={3} /></button>
      </WindowControls>
    </TradeTitle>
    <TradeBar>
      <TradeTool><Tile $a="#ff7070" $b="#e80000"><PowerMark /></Tile>退出</TradeTool>
      <TradeTool><Tile $a="#ffa040" $b="#ff7000"><Users size={14} fill="#fff" /></Tile>登录</TradeTool>
      <TradeTool><Tile $a="#8890c8" $b="#485088"><Lock size={14} fill="#fff" /></Tile>锁屏</TradeTool>
      <TradeTool><Tile $a="#5080ff" $b="#2848d0"><RefreshCw size={14} strokeWidth={3} /></Tile>刷新</TradeTool>
      <TradeTool><Tile $a="#ffa040" $b="#ff7000"><Wrench size={14} fill="#fff" /></Tile>系统</TradeTool>
      <Caret $w={25} $c="#000">▼</Caret>
      <Selects>
        <select aria-label="市场"><option>深A</option></select>
        <select aria-label="股东账号"><option>01****3567</option></select>
      </Selects>
      <TradeTool><ToolIcon name="添加" />添加</TradeTool>
      <Grow />
      {["风控", "分析", "条件"].map((t) => (
        <TradeTool key={t} $w={40}><ToolIcon name={t} />{t}</TradeTool>
      ))}
      <Caret $w={15} $c="#1060c0">▼</Caret>
      {["篮子", "双向", "内嵌", "专业", "精简"].map((t) => (
        <TradeTool key={t} $w={40}>
          <ToolIcon name={t} />
          {t}
          {t === "篮子" && <Hot>热</Hot>}
        </TradeTool>
      ))}
    </TradeBar>
    <TradeBody>
      <TreeSide>
        <Tree>
          <TreeItems>
            <TreeItem href="#"><TreeIcon $bg="#c81418">买</TreeIcon>买入[F1]</TreeItem>
            <TreeItem href="#"><TreeIcon $bg="#148c28">卖</TreeIcon>卖出[F2]</TreeItem>
            <TreeItem href="#"><TreeIcon $bg="#c81418">撤</TreeIcon>撤单[F3]</TreeItem>
            <TreeItem href="#"><TreeIcon $small $bg="#ff9840">ETF</TreeIcon><Etf>E T F</Etf></TreeItem>
            <TreeItem href="#">
              <svg width="18" height="18" viewBox="0 0 18 18">
                <path d="M9 2C4 2 2 6 3 10L0 10l5 6 4-6H6c-1-3 0-6 3-8z" fill="#e02828" />
                <path d="M9 16c5 0 7-4 6-8h3l-5-6-4 6h3c1 3 0 6-3 8z" fill="#1870d0" />
              </svg>
              其他业务
            </TreeItem>
            <TreeItem href="#">
              <svg width="18" height="18" viewBox="0 0 18 18">
                <rect x="1" y="1" width="16" height="16" fill="#f0f6ff" stroke="#203860" strokeWidth="2" />
                <path d="M4 8h6V5l4 4-4 4v-3H4z" fill="#ff9020" />
              </svg>
              资金转账
            </TreeItem>
            <TreeItem href="#">
              <svg width="18" height="18" viewBox="0 0 18 18">
                <rect x="1" y="1" width="16" height="16" fill="#f0f6ff" stroke="#1870d0" strokeWidth="2" />
                <path d="M5 9l3 4 6-9" fill="none" stroke="#ff9020" strokeWidth="2" />
              </svg>
              新三板交易
            </TreeItem>
          </TreeItems>
          <TreeScroll><span>▲</span><span>▼</span></TreeScroll>
        </Tree>
        <TreeTabs $hot>
          <button>股票交易</button>
          <button>开放式基金(场外)</button>
        </TreeTabs>
        <TreeTabs>
          <button>证券出借</button>
          <button>账户管理</button>
          <Switch>简⇆</Switch>
          <RedArrow>▶</RedArrow>
        </TreeTabs>
      </TreeSide>
      <Splitter />
      <Holdings>
        <MoneyTabs>
          <MoneyTab>人民币</MoneyTab>
          <svg width="20" height="15" viewBox="0 0 20 15" fill="none" stroke="#304870">
            <path d="M13 13.5H1.5v-12h17V6" />
            <path d="M4 10l3-3 2 2 5-5" stroke="#e02020" />
            <path d="M14.5 8.5h5v6h-5zM15 11.5h4" />
          </svg>
          收益曲线
        </MoneyTabs>
        <Balances>
          <span>资金余额</span><span>11497.17</span>
          <span>可取金额</span><span>556.31</span>
          <span>持仓盈亏</span><span>1233.24</span>
          <span>冻结金额</span><span>0.00</span>
          <span>股票市值</span><span>158217.00</span>
          <span>当日盈亏<Tint $c="#808080">ⓘ</Tint></span><span>1359.00</span>
          <span>可用金额</span><span>556.31</span>
          <span>总 资 产</span><span>207774.80</span>
          <span>当日盈亏比</span><span>0.66%</span>
        </Balances>
        <Actions>
          <button>银证转账</button>
          <button>国债逆回购</button>
          <button>止盈止损</button>
          <button>账户清仓</button>
        </Actions>
        <HoldingsTable />
      </Holdings>
    </TradeBody>
    <StatusBar>
      <StatusCell $w={151}>杭州核新软件技术有限公司</StatusCell>
      <Signal><i /><i /><i /><i /><i /></Signal>
      <StatusCell $w={56} />
      <StatusCell $w={56}>可用金额</StatusCell>
      <StatusCell $w={80} $right $c="#c00000">556.31</StatusCell>
      <StatusCell $w={32}>元</StatusCell>
      <StatusCell $w={868} $pad={9} $c="#0000a0">成交价格预警服务开通</StatusCell>
      <svg width="16" height="16" viewBox="0 0 16 16" stroke="#90a4c0" strokeWidth="2">
        <path d="M2 16L16 2M7 16l9-9M12 16l4-4" />
      </svg>
    </StatusBar>
  </TradeWindow>
);

/* ---------- income curve window ---------- */

const CurveWindow = styled.section`
  position: absolute;
  top: 547px;
  left: 232px;
  display: flex;
  flex-direction: column;
  width: 700px;
  height: 563px;
  border: 1px solid #4285d6;
  background: #f0f0f0;
  color: #323232;
  font: 12px/16px ${cjk};
`;

const CurveTitle = styled.header`
  display: flex;
  align-items: center;
  justify-content: space-between;
  height: 32px;
  padding: 0 8px 0 9px;
  background: #4285d6;
  color: #fff;
  font: 14px/32px ${mono};

  button {
    display: grid;
    padding: 0;
    border: 0;
    background: none;
  }
`;

const Card = styled.div`
  position: relative;
  flex: 1;
  margin: 10px 10px 11px 11px;
  padding: 21px 38px 0 31px;
  border-radius: 6px;
  background: #fff;
`;

const Marker = styled.div`
  position: absolute;
  top: 33px;
  left: -4px;
  width: 12px;
  height: 8px;
  background: #0078dc;
`;

const Profit = styled.div`
  display: flex;
  gap: 5px;
  align-items: center;
  height: 30px;
  font: bold 20px/30px ${cjk};

  b {
    margin-right: 29px;
    color: #ff0000;
  }

  button {
    width: 18px;
    height: 18px;
    margin: 0 0 0 auto;
    padding: 0;
    border: 1px solid #32a0f0;
    border-radius: 50%;
    background: none;
    color: #32a0f0;
    font: 12px/16px ${cjk};
  }
`;

const Rates = styled.div`
  display: flex;
  gap: 42px;
  padding: 14px 0 10px;
  font: 13px/20px ${cjk};
`;

const PeriodTabs = styled.div`
  display: flex;
  border-bottom: 1px solid #000;

  button {
    width: 60px;
    height: 22px;
    padding: 0;
    border: 0;
    background: none;
  }

  button:nth-child(5) {
    border-radius: 4px 4px 0 0;
    background: #0078dc;
    color: #fff;
  }
`;

const Legend = styled.div`
  display: flex;
  gap: 12px;
  padding: 10px 0 0 7px;
  color: #a8a8a8;
  font: 12px/16px ${sans};
`;

const curveRed = "118,1255 192,1255 206,1225 222,1222 265,1216 320,1174 363,1175 378,1182 392,1182 408,1202 420,1212 465,1182 478,1157 521,1052 565,1014 578,965 601,880 622,802 665,730 679,678 694,754 708,731 724,746 766,766 780,764 794,759 809,740 823,782 866,812 880,894 895,886 908,897 924,880 966,970 980,982 995,969 1010,960 1023,1014 1066,1024 1082,1077 1110,1064 1124,1096 1167,1160 1182,1174 1195,1160 1210,1182 1225,1220 1268,1216 1283,1213 1297,1220 1311,1202 1326,1206 1369,1201";
const curveBlue = "118,1255 164,1251 178,1258 192,1261 206,1259 222,1261 265,1253 277,1240 292,1240 305,1225 320,1227 363,1225 378,1234 392,1231 420,1250 465,1251 478,1248 495,1242 507,1242 521,1261 578,1263 592,1253 608,1255 622,1251 680,1241 708,1243 722,1237 766,1237 794,1232 809,1227 823,1239 866,1240 880,1244 895,1241 966,1247 980,1239 1066,1237 1082,1247 1110,1261 1124,1271 1167,1272 1182,1268 1195,1268 1210,1271 1225,1278 1268,1280 1283,1266 1297,1268 1326,1265 1369,1265";

const CurveChart = styled.svg`
  display: block;
  width: 100%;
  height: 290px;
  margin-top: 34px;
  overflow: visible;
`;

const IncomeCurve = () => (
  <CurveWindow>
    <CurveTitle>
      收益曲线
      <button aria-label="关闭"><X size={15} strokeWidth={4} /></button>
    </CurveTitle>
    <Card>
      <Marker />
      <Profit>
        <span>全部盈亏:</span>
        <b>11995.22</b>
        <EyeIcon size={19} />
        <button>?</button>
      </Profit>
      <Rates>
        <span>收益率: <Tint $c="#ff0000">9.26%</Tint></span>
        <span>上证: <Tint $c="#0078dc">-1.62%</Tint></span>
        <span>深证: <Tint $c="#0078dc">-3.40%</Tint></span>
        <span>创业板: <Tint $c="#0078dc">-5.98%</Tint></span>
      </Rates>
      <PeriodTabs>
        {["当日", "本月", "近三月", "2024年", "全部", "自定义"].map((t) => (
          <button key={t}>{t}</button>
        ))}
      </PeriodTabs>
      <Legend>
        <Tint $c="#0078dc">• 上证</Tint>
        <span>• 深证</span>
        <span>• 创业板</span>
      </Legend>
      <CurveChart viewBox="0 0 608 290" preserveAspectRatio="xMinYMin meet" fontFamily={cjk} fontSize="12" fill="#505050">
        <g fill="none" stroke="#fdeaea" strokeWidth="3">
          <path d="M233 53L215 54l-3 10-6 6 7 4-9 12 4 8-7 14 31 14" />
          <path d="M206 70l-2 18 8 14M213 56l-2 22 8 10M222 53h16l-20 33M250 54l14 1 10 14-14-12-22 26" />
        </g>
        <path d="M256 80c4 10 14 16 14 24 0 7-8 8-12 4l3 7h-10l3-7c-4 4-12 3-12-4 0-8 10-14 14-24z" fill="#fde6e6" />
        <text x="285" y="110" fontSize="43" fontWeight="bold" fontStyle="italic" fill="#f2f2f2">同花顺</text>
        {["100.0%", "80.0%", "60.0%", "40.0%", "20.0%", "0.0%", "-20.0%"].map((t, i) => (
          <g key={t}>
            <path d={`M6 ${10.5 + Math.round(41.6 * i)}H569`} stroke="#c4c4c4" strokeDasharray="4 2 1 2" />
            <text x="579" y={15 + Math.round(41.6 * i)}>{t}</text>
          </g>
        ))}
        <g transform="translate(-43.5 -229.7) scale(0.4464 0.3571)" fill="none">
          <polyline points={curveRed} stroke="#ff3232" vectorEffect="non-scaling-stroke" />
          <polyline points={curveBlue} stroke="#3296e6" vectorEffect="non-scaling-stroke" />
        </g>
        {["10.26", "11.16", "12.07", "12.28", "01.18"].map((t, i) => (
          <text key={t} x={16 + Math.round(134.5 * i)} y="279" textAnchor="middle">{t}</text>
        ))}
      </CurveChart>
    </Card>
  </CurveWindow>
);

const Activate = styled.div`
  position: absolute;
  right: 120px;
  bottom: 30px;
  width: 201px;
  color: rgba(150, 150, 150, 0.85);
  font: 15px/20px "Open Sans", "Noto Sans CJK SC", sans-serif;
  white-space: nowrap;
  pointer-events: none;

  strong {
    display: block;
    font-size: 20px;
    font-weight: normal;
    line-height: 26px;
  }
`;

const App = () => (
  <>
    <GlobalStyle />
    <Desktop>
      <SideTabs>
        {sideTabs.map(([t, h]) => (
          <SideTab key={t} $h={h} $on={t === "K线图"}>
            {t.split("").map((ch) => (
              <span key={ch}>{ch}</span>
            ))}
            {t === "»推荐" && <small>NEW</small>}
          </SideTab>
        ))}
      </SideTabs>
      <WatchList />
      <Chart />
      <Quote />
      <Flow />
      <Trading />
      <IncomeCurve />
      <Activate>
        <strong>激活 Windows</strong>
        转到“设置”以激活 Windows。
      </Activate>
    </Desktop>
  </>
);

export default App;
